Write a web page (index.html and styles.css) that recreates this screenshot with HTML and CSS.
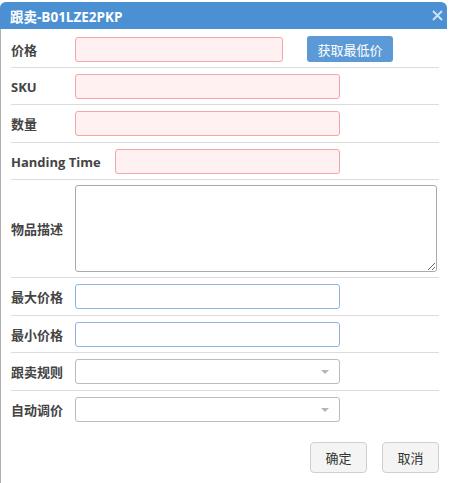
FILE: index.html
```html
<!DOCTYPE html>
<html lang="zh">
<head>
<meta charset="utf-8">
<title>跟卖</title>
<link rel="stylesheet" href="styles.css">
</head>
<body>
<div class="dialog">
  <div class="titlebar">
    <span class="title">跟卖-B01LZE2PKP</span>
    <span class="close">
      <svg width="11" height="11" viewBox="0 0 11 11"><path d="M1 1L10 10M10 1L1 10" stroke="#cfe0f2" stroke-width="2"/></svg>
    </span>
  </div>
  <div class="content">
    <div class="row first">
      <label class="lbl">价格</label>
      <input class="field req w208" type="text">
      <button class="btn-primary" type="button">获取最低价</button>
    </div>
    <div class="row">
      <label class="lbl">SKU</label>
      <input class="field req w265" type="text">
    </div>
    <div class="row tall">
      <label class="lbl">数量</label>
      <input class="field req w265" type="text">
    </div>
    <div class="row">
      <label class="lbl wide">Handing Time</label>
      <input class="field req w226" type="text">
    </div>
    <div class="row area-row">
      <label class="lbl">物品描述</label>
      <textarea class="area"></textarea>
    </div>
    <div class="row tall">
      <label class="lbl">最大价格</label>
      <input class="field focus w265" type="text">
    </div>
    <div class="row">
      <label class="lbl">最小价格</label>
      <input class="field focus w265" type="text">
    </div>
    <div class="row tall">
      <label class="lbl">跟卖规则</label>
      <div class="select w265"><span class="caret"></span></div>
    </div>
    <div class="row last">
      <label class="lbl">自动调价</label>
      <div class="select w265"><span class="caret"></span></div>
    </div>
    <div class="actions">
      <button class="btn" type="button">确定</button>
      <button class="btn" type="button">取消</button>
    </div>
  </div>
</div>
</body>
</html>
```
FILE: styles.css
```css
html, body {
  margin: 0;
  padding: 0;
  background: #ffffff;
}
body {
  font-family: "Open Sans", "Noto Sans CJK SC", sans-serif;
  font-size: 13px;
  color: #444;
}
.dialog {
  margin-top: 2px;
  width: 446px;
  border-left: 1px solid #b0b0b0;
  border-radius: 6px 6px 0 0;
  background: #fff;
  height: 500px;
}
.titlebar {
  height: 27px;
  background: #4a90d2;
  border-radius: 6px 6px 0 0;
  margin-left: -1px;
  display: flex;
  align-items: center;
  justify-content: space-between;
  padding: 0 4px 0 10px;
  color: #fff;
}
.title {
  font-weight: 700;
  font-size: 13.5px;
}
.close {
  display: flex;
  width: 11px;
  height: 11px;
}
.content {
  padding: 0 8px 0 10px;
}
.row {
  display: flex;
  align-items: center;
  padding: 6px 0 5px;
  border-bottom: 1px solid #dcdcdc;
}
.row.tall {
  padding: 6px 0 6px;
}
.row.area-row {
  padding: 5px 0 5px;
}
.row.first {
  padding: 7px 0 5px;
}
.row.last {
  border-bottom: none;
}
.lbl {
  box-sizing: border-box;
  flex: 0 0 64px;
  white-space: nowrap;
  font-weight: 700;
  font-size: 13px;
  color: #444;
}
.lbl.wide {
  flex: 0 0 104px;
}
.field {
  box-sizing: border-box;
  height: 25px;
  border-radius: 3px;
  border: 1px solid #ccc;
  background: #fff;
  padding: 0 6px;
  margin: 0;
  font: inherit;
  outline: none;
}
.field.req {
  background: #fff1f1;
  border-color: #f4a5a5;
}
.field.focus {
  border-color: #8fb3e6;
}
.w208 { width: 208px; }
.w265 { width: 265px; }
.w226 { width: 225px; }
.btn-primary {
  margin-left: 24px;
  width: 86px;
  height: 26px;
  border: none;
  border-radius: 3px;
  background: #5b9ad6;
  color: #fff;
  font-family: "Noto Sans CJK SC", sans-serif;
  font-size: 13px;
  padding: 0;
}
.area {
  box-sizing: border-box;
  width: 362px;
  height: 87px;
  border: 1px solid #aaa;
  border-radius: 3px;
  margin: 0;
  resize: vertical;
  outline: none;
}
.select {
  box-sizing: border-box;
  height: 25px;
  border: 1px solid #bbb;
  border-radius: 3px;
  background: #fff;
  display: flex;
  align-items: center;
  justify-content: flex-end;
  padding-right: 10px;
}
.caret {
  width: 0;
  height: 0;
  border-left: 4px solid transparent;
  border-right: 4px solid transparent;
  border-top: 4px solid #b5b5b5;
}
.actions {
  display: flex;
  justify-content: flex-end;
  gap: 15px;
  padding: 15px 0 0;
}
.btn {
  width: 57px;
  height: 31px;
  border: 1px solid #cfcfcf;
  border-radius: 4px;
  background: #f4f4f4;
  color: #333;
  font-family: "Noto Sans CJK SC", sans-serif;
  font-size: 13px;
  padding: 0;
}
```
